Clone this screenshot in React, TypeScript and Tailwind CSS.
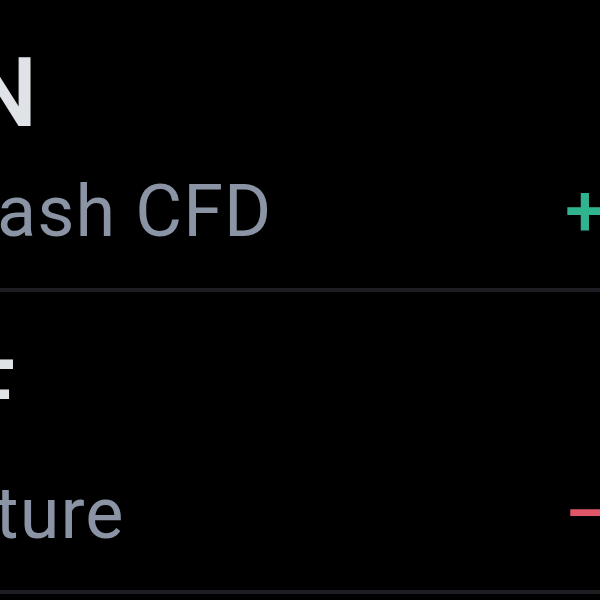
const rows = [
  {
    symbol: 'JPN',
    name: 'Japan 225 Cash CFD',
    change: '+0.84%',
    up: true,
    titleShift: '-ml-[147px]',
    nameShift: '-ml-[417px]',
  },
  {
    symbol: 'UKOIL.F',
    name: 'Brent Crude Oil Future',
    change: '−1.27%',
    up: false,
    titleShift: '-ml-[335px]',
    nameShift: '-ml-[601px]',
  },
]

export default function App() {
  return (
    <div className="w-[600px] h-[600px] overflow-hidden bg-black font-[Roboto,sans-serif]">
      {/* watchlist, cropped: symbols run off the left edge, changes off the right */}
      <div className="-mt-[10px]">
        {rows.map((r) => (
          <div key={r.symbol} className="flex items-end pt-[45px] pb-[33px] border-b-4 border-[#1c1e24]">
            <div className="flex flex-col w-[565px] shrink-0">
              <div className={`${r.titleShift} whitespace-nowrap text-[97px] leading-[116px] font-medium text-[#dfe2e6]`}>
                {r.symbol}
              </div>
              <div
                className={`${r.nameShift} mt-[18px] whitespace-nowrap text-[72px] leading-[86px] tracking-[0.015em] text-[#8a94a4]`}
              >
                {r.name}
              </div>
            </div>
            <div
              className={`whitespace-nowrap text-[72px] leading-[86px] font-medium ${
                r.up ? 'text-[#2fb48f]' : 'text-[#e2566a]'
              }`}
            >
              {r.change}
            </div>
          </div>
        ))}
      </div>
    </div>
  )
}
